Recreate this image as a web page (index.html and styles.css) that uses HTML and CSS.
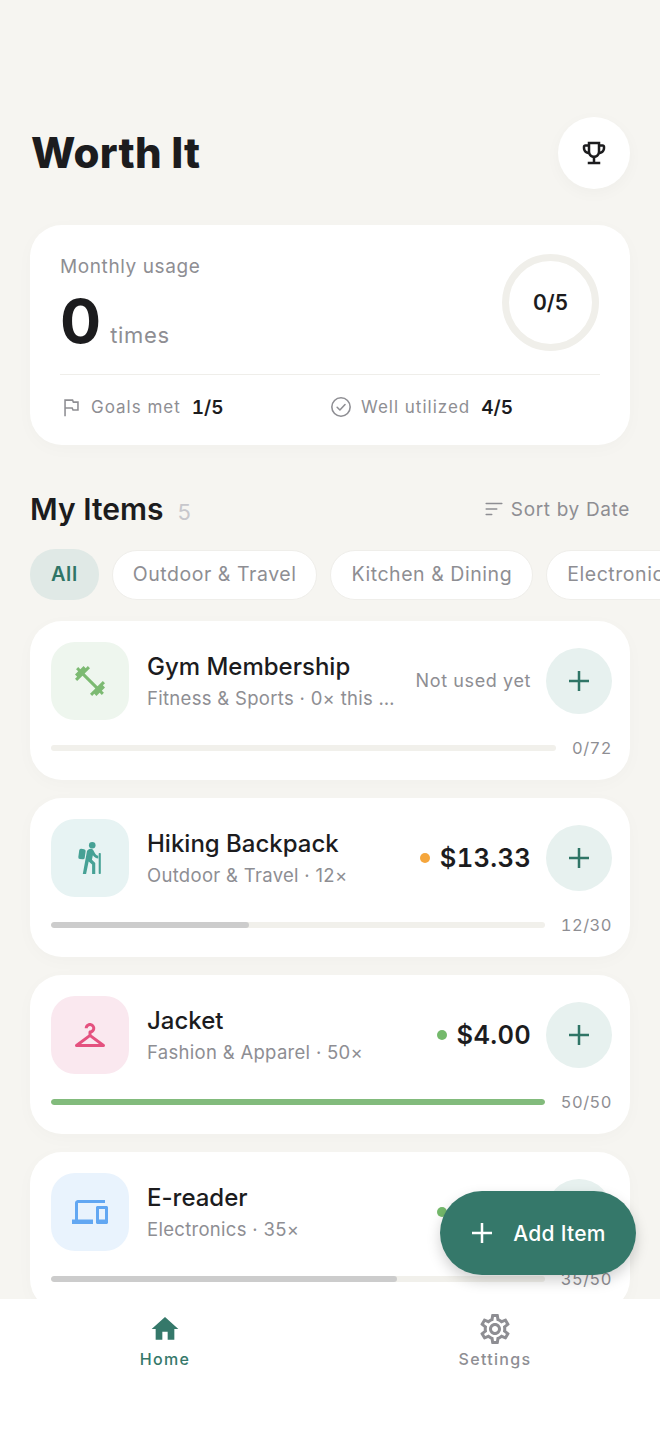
FILE: index.html
```html
<!DOCTYPE html>
<html lang="en">
<head>
<meta charset="utf-8">
<title>Worth It</title>
<link rel="stylesheet" href="styles.css">
</head>
<body>
<div class="app">
  <main class="main">
    <header class="top">
      <h1 class="title">Worth It</h1>
      <button class="trophy" aria-label="Achievements">
        <svg class="icon-30" viewBox="0 0 24 24"><path fill="#1c1c1e" d="M19 5h-2V3H7v2H5c-1.1 0-2 .9-2 2v1c0 2.55 1.92 4.63 4.39 4.94.63 1.5 1.98 2.63 3.61 2.96V19H7v2h10v-2h-4v-3.1c1.63-.33 2.98-1.46 3.61-2.96C19.08 12.63 21 10.55 21 8V7c0-1.1-.9-2-2-2zM5 8V7h2v3.82C5.84 10.4 5 9.3 5 8zm7 6c-1.65 0-3-1.35-3-3V5h6v6c0 1.65-1.35 3-3 3zm7-6c0 1.3-.84 2.4-2 2.82V7h2v1z"/></svg>
      </button>
    </header>

    <section class="summary">
      <div class="summary-top">
        <div class="usage">
          <div class="usage-label">Monthly usage</div>
          <div class="usage-line"><span class="usage-num">0</span><span class="usage-unit">times</span></div>
        </div>
        <div class="ring">0/5</div>
      </div>
      <div class="stats">
        <div class="stat">
          <svg class="icon-22" viewBox="0 0 24 24"><path fill="none" stroke="#8e8e93" stroke-width="1.7" d="M5.5 22V4.500h8.200l.9 2.200h5v8.600h-5.400l-.9-2.200H5.500"/></svg>
          <span class="stat-label">Goals met</span><span class="stat-value">1/5</span>
        </div>
        <div class="stat">
          <svg class="icon-22" viewBox="0 0 24 24"><circle cx="12" cy="12" r="10" fill="none" stroke="#8e8e93" stroke-width="1.7"/><path fill="none" stroke="#8e8e93" stroke-width="1.7" stroke-linecap="round" stroke-linejoin="round" d="M7.800 12.300l3 3 5.600-6"/></svg>
          <span class="stat-label">Well utilized</span><span class="stat-value">4/5</span>
        </div>
      </div>
    </section>

    <div class="section-head">
      <div class="section-title"><h2>My Items</h2><span class="count">5</span></div>
      <div class="sort">
        <svg class="icon-22" viewBox="0 0 24 24"><path fill="none" stroke="#8e8e93" stroke-width="1.7" stroke-linecap="round" d="M3.500 6h17M3.500 12h11.500M3.500 18h6"/></svg>
        <span>Sort by Date</span>
      </div>
    </div>

    <div class="chips">
      <span class="chip chip-active">All</span>
      <span class="chip">Outdoor &amp; Travel</span>
      <span class="chip">Kitchen &amp; Dining</span>
      <span class="chip">Electronics</span>
    </div>

    <div class="list">
      <article class="card">
        <div class="row">
          <div class="thumb thumb-green">
            <svg class="icon-36" viewBox="0 0 24 24"><path fill="#7cba72" d="M20.570 14.860L22 13.430 20.570 12 17 15.570 8.430 7 12 3.430 10.570 2 9.140 3.430 7.710 2 5.570 4.140 4.140 2.710 2.710 4.140l1.430 1.430L2 7.710l1.430 1.430L2 10.570 3.430 12 7 8.430 15.570 17 12 20.570 13.430 22l1.430-1.430L16.290 22l2.140-2.140 1.430 1.430 1.430-1.430-1.430-1.430L22 16.290z"/></svg>
          </div>
          <div class="info">
            <div class="name">Gym Membership</div>
            <div class="meta">Fitness &amp; Sports · 0× this month</div>
          </div>
          <div class="unused">Not used yet</div>
          <button class="add" aria-label="Add use"><svg class="icon-30" viewBox="0 0 24 24"><path fill="none" stroke="#2f7566" stroke-width="2" d="M12 4v16M4 12h16"/></svg></button>
        </div>
        <div class="progress">
          <div class="track"><div class="fill" style="width:0%"></div></div>
          <span class="ratio">0/72</span>
        </div>
      </article>

      <article class="card">
        <div class="row">
          <div class="thumb thumb-teal">
            <svg class="icon-36" viewBox="0 0 24 24"><g fill="#46a195"><circle cx="13.500" cy="3.500" r="2.200"/><rect x="17.800" y="8.700" width="1.400" height="14" rx=".5"/><rect x="4.500" y="6" width="4.300" height="6.800" rx="1.200" transform="rotate(8 6.700 9.400)"/><path d="M10 7.400c.5-1 1.700-1.800 2.900-1.500.7.2 1.200.7 1.500 1.300l1 1.800c.5.800 1.200 1.300 2.100 1.500v1.800c-1.500-.2-2.800-1-3.600-2.200l-.6 3 2.200 2.200v7.400h-2.100v-6.300l-2.300-2.100-1.700 8.400H7.200z"/></g></svg>
          </div>
          <div class="info">
            <div class="name">Hiking Backpack</div>
            <div class="meta">Outdoor &amp; Travel · 12×</div>
          </div>
          <div class="price"><span class="dot dot-orange"></span>$13.33</div>
          <button class="add" aria-label="Add use"><svg class="icon-30" viewBox="0 0 24 24"><path fill="none" stroke="#2f7566" stroke-width="2" d="M12 4v16M4 12h16"/></svg></button>
        </div>
        <div class="progress">
          <div class="track"><div class="fill" style="width:40%"></div></div>
          <span class="ratio">12/30</span>
        </div>
      </article>

      <article class="card">
        <div class="row">
          <div class="thumb thumb-pink">
            <svg class="icon-36" viewBox="0 0 24 24"><path fill="#e4517f" d="M21.600 18.200L13 11.750v-.91c1.650-.49 2.800-2.170 2.430-4.050-.26-1.310-1.300-2.400-2.610-2.700C10.540 3.570 8.500 5.300 8.500 7.500h2c0-.83.67-1.500 1.500-1.500s1.500.67 1.500 1.500c0 .84-.69 1.520-1.530 1.500-.54-.01-.97.45-.97.99v1.760L2.400 18.200c-.77.58-.36 1.800.6 1.800h18c.96 0 1.370-1.220.6-1.800zM6 18l6-4.500 6 4.500H6z"/></svg>
          </div>
          <div class="info">
            <div class="name">Jacket</div>
            <div class="meta">Fashion &amp; Apparel · 50×</div>
          </div>
          <div class="price"><span class="dot dot-green"></span>$4.00</div>
          <button class="add" aria-label="Add use"><svg class="icon-30" viewBox="0 0 24 24"><path fill="none" stroke="#2f7566" stroke-width="2" d="M12 4v16M4 12h16"/></svg></button>
        </div>
        <div class="progress">
          <div class="track"><div class="fill fill-green" style="width:100%"></div></div>
          <span class="ratio">50/50</span>
        </div>
      </article>

      <article class="card">
        <div class="row">
          <div class="thumb thumb-blue">
            <svg class="icon-36" viewBox="0 0 24 24"><path fill="#62a7f2" d="M4 6h18V4H4c-1.100 0-2 .9-2 2v11H0v3h14v-3H4V6zm19 2h-6c-.55 0-1 .45-1 1v10c0 .55.45 1 1 1h6c.55 0 1-.45 1-1V9c0-.55-.45-1-1-1zm-1 9h-4v-7h4v7z"/></svg>
          </div>
          <div class="info">
            <div class="name">E-reader</div>
            <div class="meta">Electronics · 35×</div>
          </div>
          <div class="price"><span class="dot dot-green"></span>$4.00</div>
          <button class="add" aria-label="Add use"><svg class="icon-30" viewBox="0 0 24 24"><path fill="none" stroke="#2f7566" stroke-width="2" d="M12 4v16M4 12h16"/></svg></button>
        </div>
        <div class="progress">
          <div class="track"><div class="fill" style="width:70%"></div></div>
          <span class="ratio">35/50</span>
        </div>
      </article>
    </div>
  </main>

  <button class="fab">
    <svg class="icon-30" viewBox="0 0 24 24"><path fill="none" stroke="#fff" stroke-width="2" d="M12 4v16M4 12h16"/></svg>
    <span>Add Item</span>
  </button>

  <nav class="nav">
    <div class="tab tab-active">
      <svg class="icon-32" viewBox="0 0 24 24"><path fill="#35786a" d="M10 20v-6h4v6h5v-8h3L12 3 2 12h3v8z"/></svg>
      <span>Home</span>
    </div>
    <div class="tab">
      <svg class="icon-gear" viewBox="0 0 24 24"><path fill="#8e8e93" d="M19.430 12.980c.04-.32.07-.64.07-.98 0-.34-.03-.66-.07-.98l2.110-1.650c.19-.15.24-.42.12-.64l-2-3.460c-.09-.16-.26-.25-.44-.25-.06 0-.12.01-.17.03l-2.490 1c-.52-.4-1.080-.73-1.690-.98l-.38-2.650C14.460 2.180 14.250 2 14 2h-4c-.25 0-.46.18-.49.42l-.38 2.650c-.61.25-1.170.59-1.690.98l-2.490-1c-.06-.02-.12-.03-.18-.03-.17 0-.34.09-.43.25l-2 3.460c-.13.22-.07.49.12.64l2.110 1.650c-.04.32-.07.65-.07.98 0 .33.03.66.07.98l-2.110 1.650c-.19.15-.24.42-.12.64l2 3.460c.09.16.26.25.44.25.06 0 .12-.01.17-.03l2.490-1c.52.4 1.080.73 1.690.98l.38 2.650c.03.24.24.42.49.42h4c.25 0 .46-.18.49-.42l.38-2.650c.61-.25 1.170-.59 1.690-.98l2.490 1c.06.02.12.03.18.03.17 0 .34-.09.43-.25l2-3.460c.12-.22.07-.49-.12-.64l-2.110-1.650zm-1.980-1.710c.04.31.05.52.05.73 0 .21-.02.43-.05.73l-.14 1.130.89.7 1.080.84-.7 1.210-1.270-.51-1.040-.42-.9.68c-.43.32-.84.56-1.250.73l-1.060.43-.16 1.130-.2 1.350h-1.400l-.19-1.350-.16-1.130-1.060-.43c-.43-.18-.83-.41-1.230-.71l-.91-.7-1.060.43-1.270.51-.7-1.210 1.080-.84.89-.7-.14-1.130c-.03-.31-.05-.54-.05-.74s.02-.43.05-.73l.14-1.130-.89-.7-1.080-.84.7-1.210 1.270.51 1.040.42.9-.68c.43-.32.84-.56 1.250-.73l1.060-.43.16-1.130.2-1.350h1.390l.19 1.350.16 1.130 1.060.43c.43.18.83.41 1.230.71l.91.7 1.060-.43 1.270-.51.7 1.210-1.070.85-.89.7.14 1.130zM12 8c-2.210 0-4 1.790-4 4s1.790 4 4 4 4-1.790 4-4-1.790-4-4-4zm0 6c-1.100 0-2-.9-2-2s.9-2 2-2 2 .9 2 2-.9 2-2 2z"/></svg>
      <span>Settings</span>
    </div>
  </nav>
</div>
</body>
</html>
```

FILE: styles.css
```css
* { box-sizing: border-box; }
html, body { margin: 0; padding: 0; }
body {
  font-family: Inter, "Liberation Sans", sans-serif;
  background: #f6f5f1;
  color: #1c1c1e;
}
button { font: inherit; border: 0; padding: 0; cursor: pointer; }
svg { display: block; flex: none; }
.icon-22 { width: 22px; height: 22px; }
.icon-30 { width: 30px; height: 30px; }
.icon-32 { width: 32px; height: 32px; }
.icon-36 { width: 36px; height: 36px; }
.icon-gear { width: 36px; height: 36px; margin: -2px 0; }

.app {
  position: relative;
  width: 660px;
  height: 1434px;
  display: flex;
  flex-direction: column;
  overflow: hidden;
}
.main {
  flex: 1;
  min-height: 0;
  overflow: hidden;
  padding: 117px 30px 0;
}

.top {
  display: flex;
  align-items: center;
  justify-content: space-between;
  height: 72px;
  margin-bottom: 36px;
}
.title {
  margin: 0 0 0 1px;
  font-size: 42px;
  line-height: 50px;
  font-weight: 800;
  letter-spacing: 0.2px;
}
.trophy {
  width: 72px;
  height: 72px;
  border-radius: 50%;
  background: #fff;
  display: flex;
  align-items: center;
  justify-content: center;
  box-shadow: 0 4px 16px rgba(0, 0, 0, 0.03);
}

.summary {
  height: 220px;
  background: #fff;
  border-radius: 32px;
  padding: 29px 30px 0;
  box-shadow: 0 4px 18px rgba(0, 0, 0, 0.025);
}
.summary-top {
  display: flex;
  justify-content: space-between;
  height: 121px;
  border-bottom: 1px solid #efeeea;
}
.usage-label {
  margin-top: 1px;
  font-size: 19px;
  line-height: 24px;
  color: #8e8e93;
  letter-spacing: 0.6px;
}
.usage-line {
  display: flex;
  align-items: baseline;
  gap: 9px;
  margin-top: 6px;
}
.usage-num {
  font-size: 61px;
  line-height: 72px;
  font-weight: 700;
}
.usage-unit {
  font-size: 22px;
  color: #8e8e93;
  letter-spacing: 0.7px;
}
.ring {
  width: 97px;
  height: 97px;
  margin-right: 1px;
  border: 7px solid #f0efea;
  border-radius: 50%;
  display: flex;
  align-items: center;
  justify-content: center;
  font-size: 21px;
  font-weight: 600;
}
.stats {
  display: flex;
  height: 64px;
  align-items: center;
}
.stat {
  flex: 1;
  display: flex;
  align-items: center;
}
.stat-label {
  margin-left: 9px;
  font-size: 17px;
  color: #8e8e93;
  letter-spacing: 1px;
}
.stat-value {
  margin-left: 11px;
  font-size: 19px;
  font-weight: 600;
  font-variant-numeric: tabular-nums;
}

.section-head {
  display: flex;
  align-items: center;
  justify-content: space-between;
  margin-top: 45px;
  height: 38px;
}
.section-title {
  display: flex;
  align-items: baseline;
  gap: 14px;
}
.section-title h2 {
  margin: 0;
  font-size: 30px;
  font-weight: 600;
}
.count {
  font-size: 22px;
  color: #c7c7cc;
}
.sort {
  display: flex;
  align-items: center;
  gap: 6px;
  font-size: 19px;
  color: #8e8e93;
  letter-spacing: 0.65px;
}

.chips {
  display: flex;
  gap: 13px;
  margin-top: 21px;
  margin-right: -30px;
  overflow: hidden;
  align-items: center;
}
.chip {
  flex: none;
  height: 50px;
  padding: 0 20px 2px;
  display: flex;
  align-items: center;
  background: #fff;
  border: 1px solid #efeeea;
  border-radius: 25px;
  font-size: 19.5px;
  color: #8e8e93;
  letter-spacing: 0.55px;
}
.chip-active {
  height: 51px;
  padding: 0 21px 2px;
  background: #e0e9e6;
  border: 0;
  color: #2f7566;
  font-size: 20px;
  font-weight: 600;
}

.list {
  display: flex;
  flex-direction: column;
  gap: 18px;
  margin-top: 21px;
}
.card {
  flex: none;
  height: 159px;
  background: #fff;
  border-radius: 32px;
  padding: 21px 18px 0 21px;
  box-shadow: 0 4px 18px rgba(0, 0, 0, 0.025);
}
.row {
  display: flex;
  align-items: center;
  height: 78px;
}
.thumb {
  flex: none;
  width: 78px;
  height: 78px;
  border-radius: 24px;
  display: flex;
  align-items: center;
  justify-content: center;
}
.thumb-green { background: #eef6ee; }
.thumb-teal { background: #e7f3f3; }
.thumb-pink { background: #fae8ef; }
.thumb-blue { background: #e9f3fd; }
.info {
  flex: 1;
  min-width: 0;
  margin-left: 18px;
}
.name {
  font-size: 24px;
  line-height: 32px;
  font-weight: 500;
}
.meta {
  margin-top: 2px;
  font-size: 18.5px;
  line-height: 26px;
  color: #8e8e93;
  letter-spacing: 0.3px;
  white-space: nowrap;
  overflow: hidden;
  text-overflow: ellipsis;
}
.unused {
  flex: none;
  margin-left: 20px;
  padding-bottom: 2px;
  font-size: 18px;
  color: #8e8e93;
  letter-spacing: 0.6px;
}
.price {
  flex: none;
  display: flex;
  align-items: center;
  gap: 10px;
  margin-left: 12px;
  padding-bottom: 1px;
  font-size: 25.5px;
  font-weight: 600;
  letter-spacing: 0.3px;
  font-variant-numeric: tabular-nums;
}
.dot {
  width: 10px;
  height: 10px;
  border-radius: 50%;
}
.dot-orange { background: #f5a63c; }
.dot-green { background: #74b96b; }
.add {
  flex: none;
  width: 66px;
  height: 66px;
  margin-left: 15px;
  border-radius: 50%;
  background: #e7f1ef;
  display: flex;
  align-items: center;
  justify-content: center;
}
.progress {
  display: flex;
  align-items: center;
  gap: 16px;
  margin-top: 18px;
  height: 20px;
}
.track {
  flex: 1;
  height: 6px;
  border-radius: 3px;
  background: #f1f0eb;
  overflow: hidden;
}
.fill {
  height: 100%;
  border-radius: 3px;
  background: #cccccc;
}
.fill-green { background: #82bb7c; }
.ratio {
  flex: none;
  font-size: 16.5px;
  color: #8e8e93;
  letter-spacing: 0.5px;
  font-variant-numeric: tabular-nums;
}

.fab {
  position: absolute;
  right: 24px;
  bottom: 159px;
  width: 196px;
  height: 84px;
  border-radius: 42px;
  background: #35786a;
  color: #fff;
  display: flex;
  align-items: center;
  justify-content: center;
  gap: 16px;
  padding-right: 3px;
  font-size: 21px;
  font-weight: 500;
  letter-spacing: 0.3px;
  box-shadow: 0 6px 14px rgba(0, 0, 0, 0.18);
}

.nav {
  flex: none;
  position: relative;
  height: 135px;
  background: #fff;
  display: flex;
  padding-top: 14px;
  align-items: flex-start;
}
.tab {
  flex: 1;
  display: flex;
  flex-direction: column;
  align-items: center;
  gap: 4px;
  font-size: 16px;
  line-height: 20px;
  font-weight: 500;
  color: #8e8e93;
  letter-spacing: 1.3px;
}
.tab-active { color: #35786a; }
```
